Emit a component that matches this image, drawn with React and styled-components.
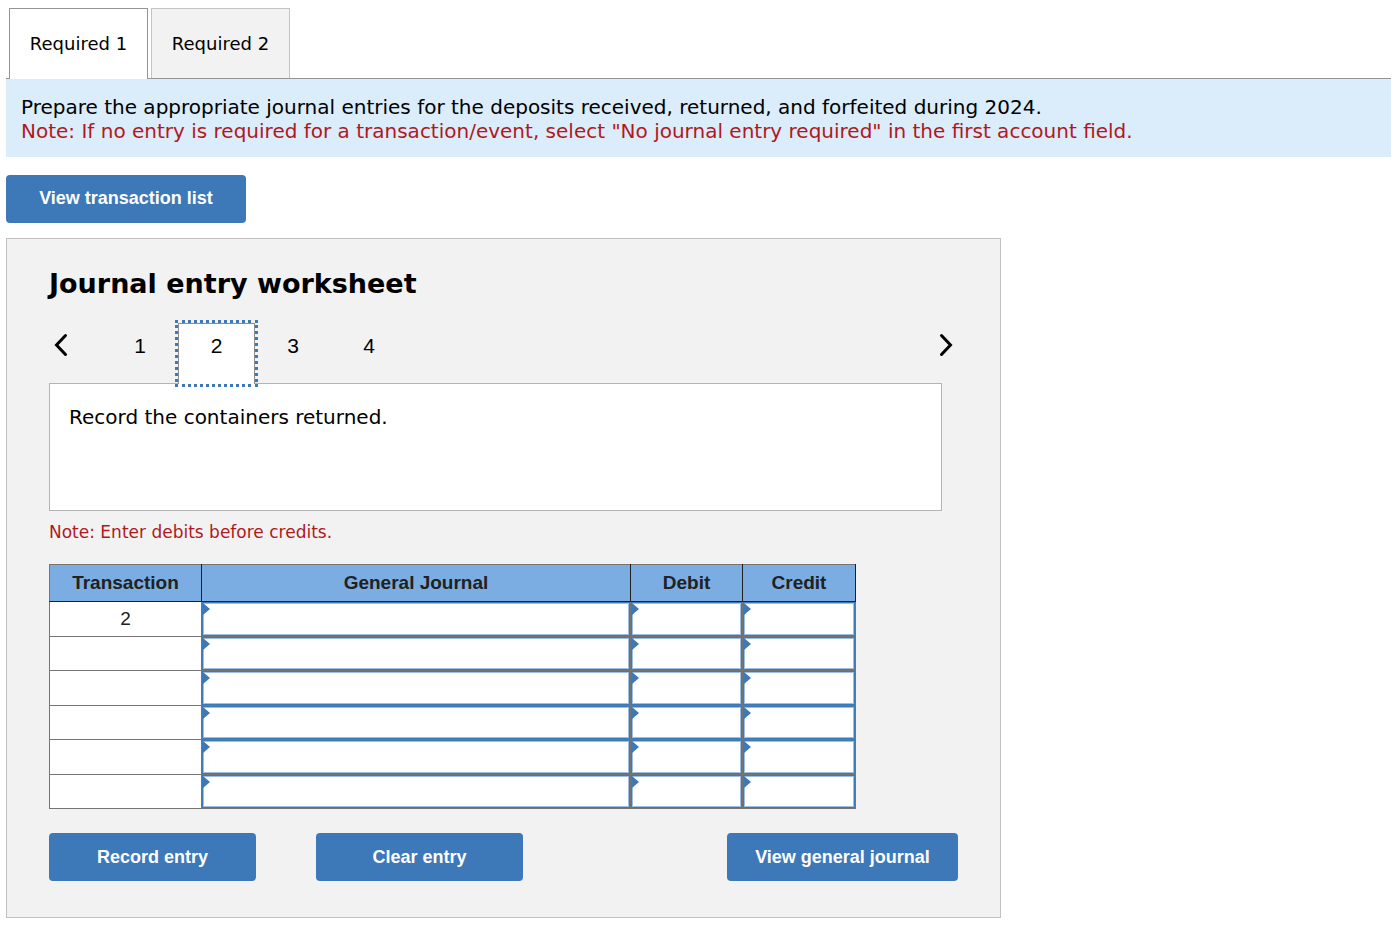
import React, { useState } from 'react';
import styled, { createGlobalStyle } from 'styled-components';

const requirements = ['Required 1', 'Required 2'];
const entries = [1, 2, 3, 4];
const rows = [1, 2, 3, 4, 5, 6];
const columns = ['General Journal', 'Debit', 'Credit'];

function App() {
  const [activeRequirement, setActiveRequirement] = useState('Required 1');
  const [activeEntry, setActiveEntry] = useState(2);

  const handlePrevious = () => {
    setActiveEntry(Math.max(1, activeEntry - 1));
  };

  const handleNext = () => {
    setActiveEntry(Math.min(entries.length, activeEntry + 1));
  };

  return (
    <Page>
      <GlobalStyle />
      <TabList role="tablist">
        {requirements.map((name) => (
          <Tab
            key={name}
            type="button"
            role="tab"
            aria-selected={name === activeRequirement}
            $active={name === activeRequirement}
            onClick={() => setActiveRequirement(name)}
          >
            {name}
          </Tab>
        ))}
      </TabList>
      <Prompt>
        <p>Prepare the appropriate journal entries for the deposits received, returned, and forfeited during 2024.</p>
        <PromptNote>
          Note: If no entry is required for a transaction/event, select "No journal entry required" in the first account
          field.
        </PromptNote>
      </Prompt>
      <ListButton type="button">View transaction list</ListButton>
      <Worksheet>
        <Title>Journal entry worksheet</Title>
        <Pager>
          <ArrowButton type="button" aria-label="Previous entry" onClick={handlePrevious}>
            <svg width="16" height="24" viewBox="0 0 16 24" fill="none" stroke="#000" strokeWidth="3">
              <path d="M12.5 2.5L3.5 12L12.5 21.5" strokeLinecap="round" />
            </svg>
          </ArrowButton>
          <EntryTabs>
            {entries.map((entry) => (
              <EntryTab
                key={entry}
                type="button"
                $active={entry === activeEntry}
                onClick={() => setActiveEntry(entry)}
              >
                {entry}
              </EntryTab>
            ))}
          </EntryTabs>
          <ArrowButton type="button" aria-label="Next entry" onClick={handleNext}>
            <svg width="16" height="24" viewBox="0 0 16 24" fill="none" stroke="#000" strokeWidth="3">
              <path d="M3.5 2.5L12.5 12L3.5 21.5" strokeLinecap="round" />
            </svg>
          </ArrowButton>
        </Pager>
        <Description>Record the containers returned.</Description>
        <Note>Note: Enter debits before credits.</Note>
        <Journal>
          <colgroup>
            <Column $width={152} />
            <Column $width={429} />
            <Column $width={112} />
            <Column $width={113} />
          </colgroup>
          <thead>
            <tr>
              <HeaderCell scope="col">Transaction</HeaderCell>
              {columns.map((column) => (
                <HeaderCell key={column} scope="col">
                  {column}
                </HeaderCell>
              ))}
            </tr>
          </thead>
          <tbody>
            {rows.map((row) => (
              <Row key={row}>
                <Cell>{row === 1 && activeEntry}</Cell>
                {columns.map((column) => (
                  <FieldCell key={column}>
                    <CellInput type="text" aria-label={`${column}, row ${row}`} />
                  </FieldCell>
                ))}
              </Row>
            ))}
          </tbody>
        </Journal>
        <Actions>
          <ActionButton type="button">Record entry</ActionButton>
          <ActionButton type="button">Clear entry</ActionButton>
          <JournalButton type="button">View general journal</JournalButton>
        </Actions>
      </Worksheet>
    </Page>
  );
}

export default App;

const GlobalStyle = createGlobalStyle`
  * {
    box-sizing: border-box;
  }
  body {
    margin: 0;
    background: #fff;
    color: #000;
    font-family: Verdana, 'DejaVu Sans', sans-serif;
  }
  p {
    margin: 0;
  }
  button,
  input {
    font: inherit;
    color: inherit;
  }
`;

const Page = styled.div`
  padding: 8px 9px 18px 6px;
`;

const TabList = styled.div`
  display: flex;
  gap: 3px;
  padding-left: 3px;
  border-bottom: 1px solid #949494;
`;

const Tab = styled.button`
  height: ${(props) => (props.$active ? 71 : 70)}px;
  min-width: 139px;
  margin-bottom: ${(props) => (props.$active ? -1 : 0)}px;
  padding: 0 19px ${(props) => (props.$active ? 1 : 0)}px;
  font-size: 18px;
  border: 1px solid ${(props) => (props.$active ? '#949494' : '#c4c4c4')};
  border-bottom: none;
  background: ${(props) => (props.$active ? '#fff' : '#f2f2f2')};
`;

const Prompt = styled.div`
  padding: 16px 15px 14px;
  background: #dbecfa;
  font-size: 20px;
  line-height: 24px;
`;

const PromptNote = styled.p`
  color: #b0181e;
`;

const Button = styled.button`
  height: 48px;
  border: none;
  border-radius: 4px;
  background: #3d78b8;
  color: #fff;
  font-family: Arial, 'Liberation Sans', sans-serif;
  font-size: 18px;
  font-weight: bold;
`;

const ListButton = styled(Button)`
  width: 240px;
  margin: 18px 0 15px;
  padding-bottom: 3px;
  display: block;
`;

const Worksheet = styled.section`
  max-width: 995px;
  padding: 28px 42px 36px;
  border: 1px solid #c0c0c0;
  background: #f2f2f2;
`;

const Title = styled.h1`
  margin: 0;
  font-size: 27px;
  line-height: 34px;
  font-weight: bold;
`;

const Pager = styled.div`
  display: flex;
  align-items: flex-start;
  padding-top: 22px;
`;

const ArrowButton = styled.button`
  display: flex;
  padding: 10px 4px 8px;
  border: none;
  background: none;
`;

const EntryTabs = styled.div`
  display: flex;
  flex: 1;
  padding-left: 29px;
`;

const EntryTab = styled.button`
  position: relative;
  width: ${(props) => (props.$active ? 77 : 76)}px;
  height: 61px;
  margin-bottom: -1px;
  padding: 0 0 16px;
  border: 1px solid ${(props) => (props.$active ? '#8c8c8c' : 'transparent')};
  border-bottom: none;
  background: ${(props) => (props.$active ? '#fff' : 'none')};
  outline: ${(props) => (props.$active ? '3px dotted #3d78b8' : 'none')};
  font-family: Arial, 'Liberation Sans', sans-serif;
  font-size: 21px;
`;

const Description = styled.div`
  min-height: 128px;
  margin-right: 16px;
  padding: 21px 19px;
  border: 1px solid #b4b4b4;
  background: #fff;
  font-size: 20px;
  line-height: 24px;
`;

const Note = styled.p`
  padding: 11px 0 22px;
  color: #b0181e;
  font-size: 17px;
  line-height: 20px;
`;

const Journal = styled.table`
  width: 807px;
  max-width: 100%;
  table-layout: fixed;
  border-collapse: collapse;
  border: 1px solid #757575;
  background: #fff;
  color: #212121;
  font-family: Arial, 'Liberation Sans', sans-serif;
  font-size: 19px;
`;

const Column = styled.col`
  width: ${(props) => props.$width}px;
`;

const HeaderCell = styled.th`
  height: 37px;
  padding: 0;
  border: 1px solid #212121;
  border-top-color: #757575;
  background: #7bade2;

  &:first-child {
    border-left-color: #757575;
  }
`;

const Row = styled.tr`
  height: 35px;

  &:nth-child(even) {
    height: 34px;
  }
`;

const Cell = styled.td`
  padding: 0;
  border: 1px solid #757575;
  text-align: center;
`;

const FieldCell = styled(Cell)`
  position: relative;

  /* corner flag over the white field */
  &::after {
    content: '';
    position: absolute;
    top: 1px;
    left: 1px;
    border: 6px solid transparent;
    border-left: 7px solid #3d78b8;
    border-right: none;
    pointer-events: none;
  }
`;

const CellInput = styled.input`
  display: block;
  width: 100%;
  height: 34px;
  padding: 0 12px;
  border: 1px solid #3d78b8;
  border-radius: 0;
  outline: none;
  background: #fff;
  box-shadow: inset 0 0 0 1px #9dbfe2;

  ${Row}:nth-child(even) & {
    height: 33px;
  }
`;

const Actions = styled.div`
  display: flex;
  gap: 60px;
  padding-top: 24px;
`;

const ActionButton = styled(Button)`
  width: 207px;
`;

const JournalButton = styled(Button)`
  width: 231px;
  margin-left: auto;
`;
